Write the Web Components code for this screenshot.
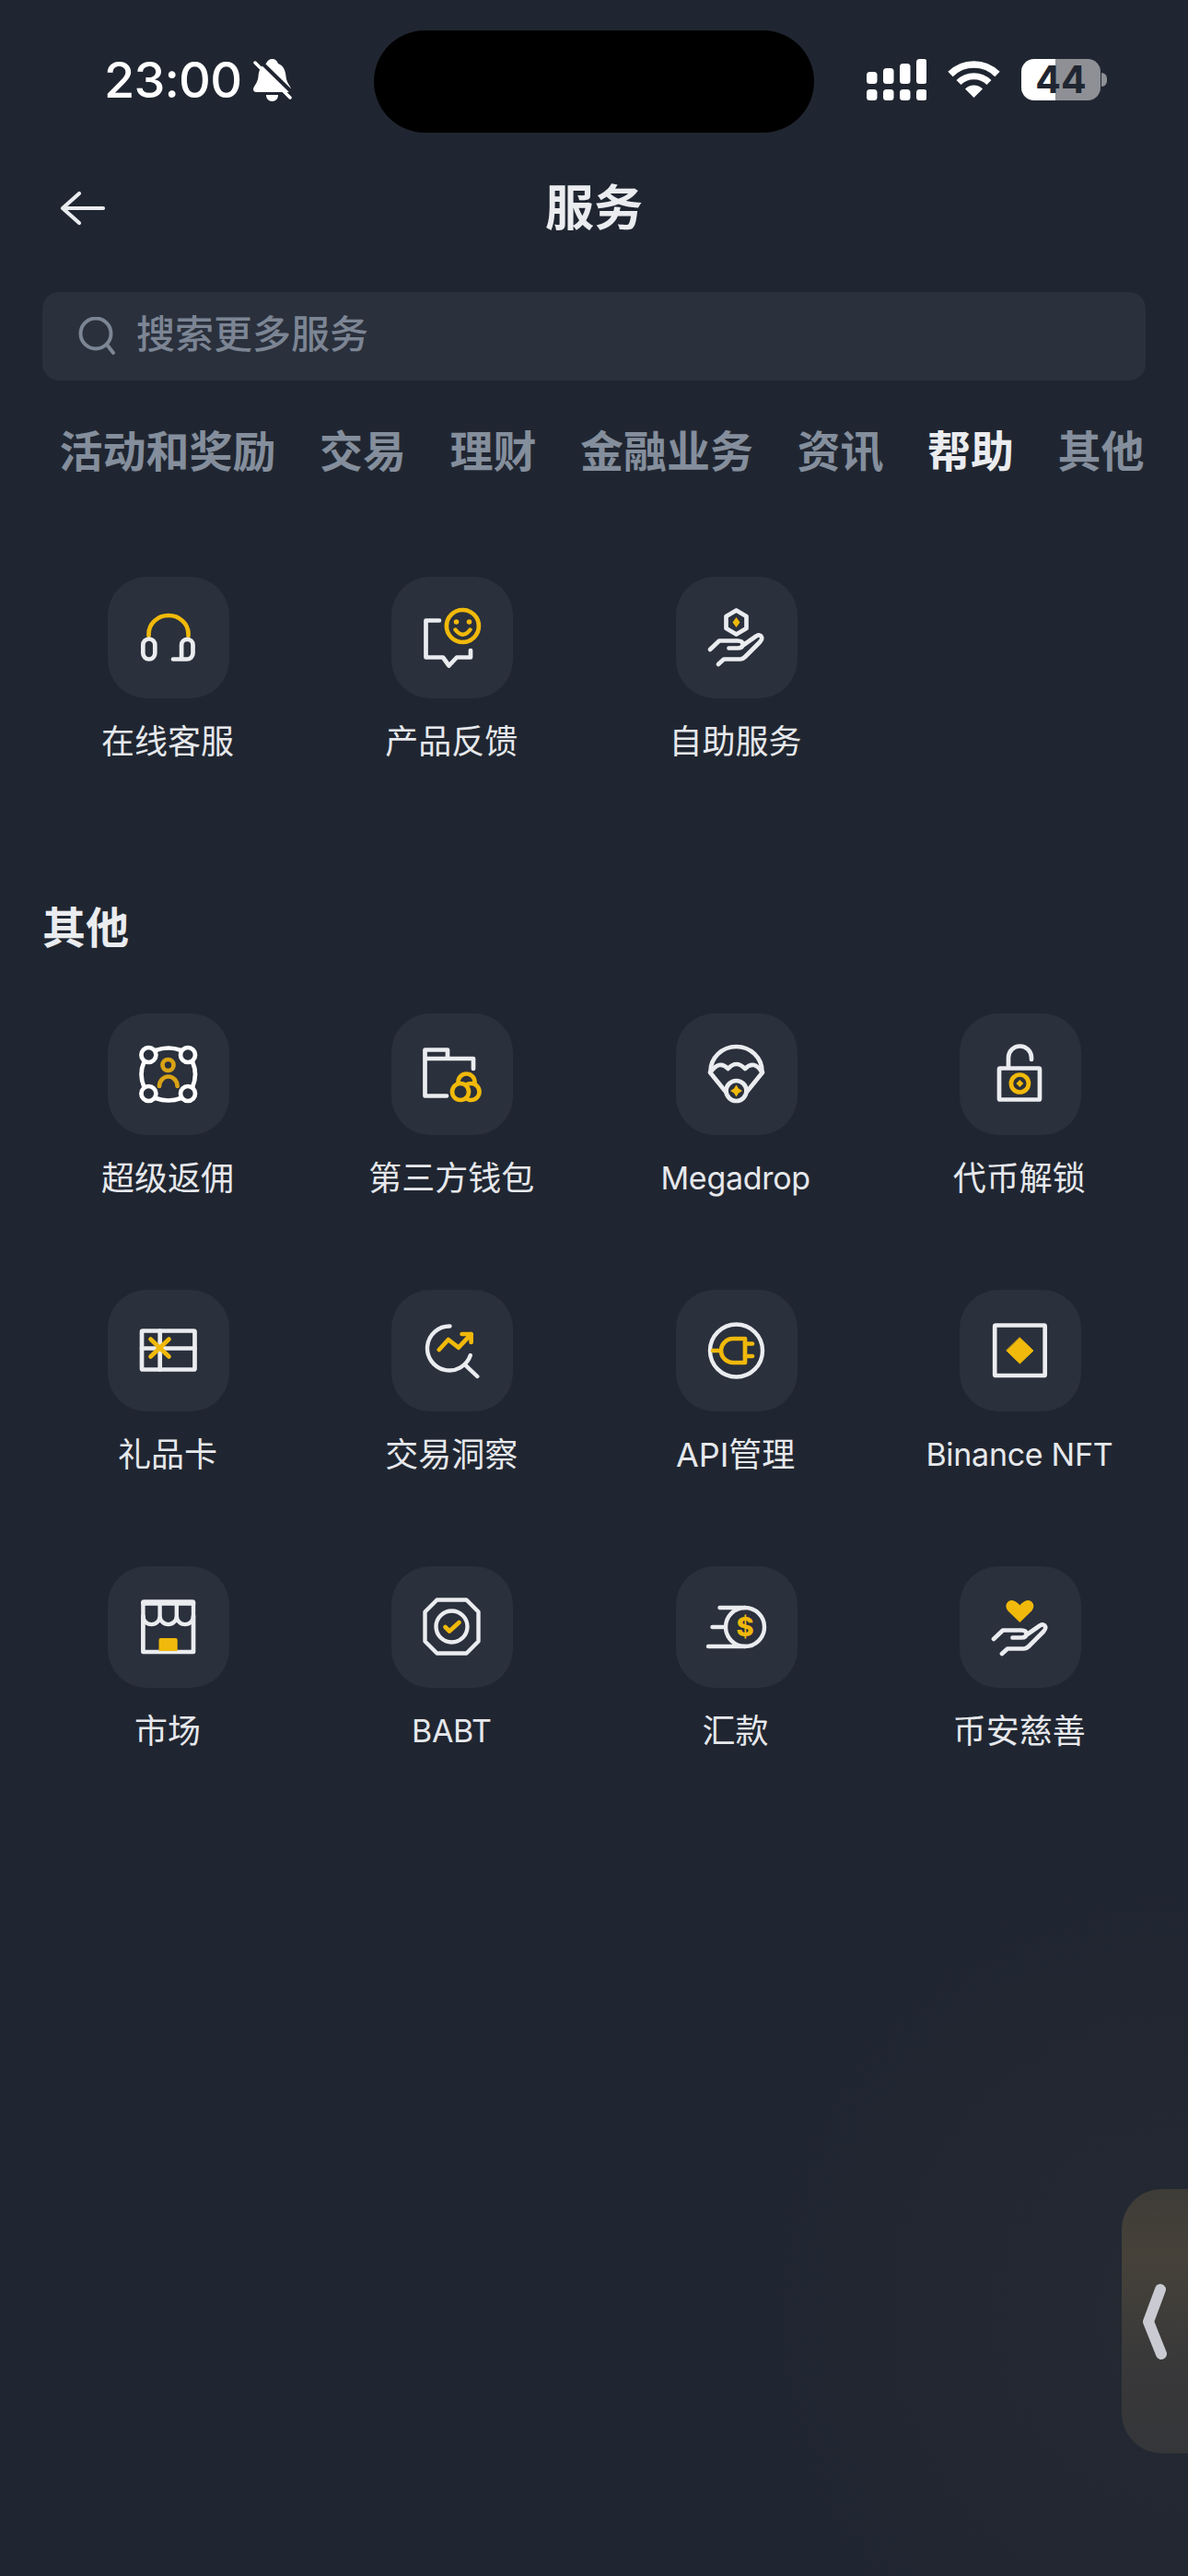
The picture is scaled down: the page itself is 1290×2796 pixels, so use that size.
<!DOCTYPE html>
<html lang="zh">
<head>
<meta charset="utf-8">
<title>服务</title>
<style>
  html, body {
    margin: 0;
    background: #202631;
  }
  body {
    font-family: Inter, 'Noto Sans CJK SC', sans-serif;
    color: #eaecef;
  }
</style>
</head>
<body>
<services-page>
  <status-bar></status-bar>
  <nav-bar>服务</nav-bar>
  <search-box>搜索更多服务</search-box>
  <tab-strip>
    <tab-item>活动和奖励</tab-item>
    <tab-item>交易</tab-item>
    <tab-item>理财</tab-item>
    <tab-item>金融业务</tab-item>
    <tab-item>资讯</tab-item>
    <tab-item active>帮助</tab-item>
    <tab-item>其他</tab-item>
  </tab-strip>
  <service-section first>
    <service-item icon="headset">在线客服</service-item>
    <service-item icon="feedback">产品反馈</service-item>
    <service-item icon="selfhelp">自助服务</service-item>
  </service-section>
  <service-section heading="其他">
    <service-item icon="rebate">超级返佣</service-item>
    <service-item icon="wallet">第三方钱包</service-item>
    <service-item icon="megadrop" latin>Megadrop</service-item>
    <service-item icon="unlock">代币解锁</service-item>
    <service-item icon="gift">礼品卡</service-item>
    <service-item icon="insight">交易洞察</service-item>
    <service-item icon="api">API管理</service-item>
    <service-item icon="nft" latin>Binance NFT</service-item>
    <service-item icon="market">市场</service-item>
    <service-item icon="babt" latin>BABT</service-item>
    <service-item icon="remit">汇款</service-item>
    <service-item icon="charity">币安慈善</service-item>
  </service-section>
  <side-handle></side-handle>
</services-page>

<script>
/**
 * The services screen, built from small web components.
 */

const HAND = 'M37 79L47 69.5H67Q73 69.5 72.5 74Q72 77.5 67 77.5H57.5M72 75L87 64.5Q91.5 62 93 65.5Q94 67.5 91 71L75 87Q72.5 89.5 70 89.5H52L46 95'

// Icons are drawn in the 132px tile's own coordinates.
const ICONS = {
  headset: `
    <path class="y" d="M44.5 64V62a21.5 20 0 0 1 43 0v2"/>
    <rect class="w" x="38.3" y="67.5" width="13" height="22" rx="6.5"/>
    <path class="w" d="M71 89.5H86a6.5 6.5 0 0 0 6.5-6.5V74a6.2 6.2 0 0 0-12.400 0v15"/>`,
  feedback: `
    <path class="w" d="M52 47.500H37.500V87.500H56L62.500 96.500L71 87.500H86V80"/>
    <circle class="y" cx="77.400" cy="53.500" r="17.500"/>
    <circle class="yf" cx="70.500" cy="49" r="2.800"/>
    <circle class="yf" cx="84.500" cy="49" r="2.800"/>
    <path class="y thin" d="M69.500 57.500Q77.500 68 85.500 57.500"/>`,
  selfhelp: `
    <path class="w" d="M65.500 36.500L76.500 43V56L65.500 62.500L54.500 56V43Z"/>
    <path class="yf" d="M65.500 44L69.500 49.500L65.500 55L61.500 49.500Z"/>
    <path class="w" d="${HAND}"/>`,
  rebate: `
    <circle class="p" cx="44.400" cy="45" r="8"/>
    <circle class="p" cx="87" cy="45" r="8"/>
    <circle class="p" cx="44.400" cy="87" r="8"/>
    <circle class="p" cx="87" cy="87" r="8"/>
    <path class="p" d="M52 40Q66 35 79.500 40M92 52.500Q98 66 92 80M79.500 92Q66 97 52 92M39.500 80Q33.500 66 39.500 52.500"/>
    <circle class="g" cx="65.500" cy="56" r="6"/>
    <path class="g" d="M56 79a9.800 10.500 0 0 1 19.600 0"/>`,
  wallet: `
    <path class="w" d="M60 89.500H36.500V39.500H61V49H89V60M36.500 49H61"/>
    <circle class="y" cx="81.500" cy="74.500" r="9"/>
    <circle class="y tf" cx="86.500" cy="85" r="9"/>
    <circle class="y tf" cx="75" cy="85" r="9"/>`,
  megadrop: `
    <path class="w" d="M37.500 63A28 27 0 0 1 93.500 63"/>
    <path class="w" d="M37.500 64Q47 50 56.500 60Q65.500 50 75 60Q85 50 93.500 64"/>
    <path class="w" d="M37 64L54 85M94 64L77 85"/>
    <circle class="w" cx="65.500" cy="84" r="11"/>
    <path class="yf" d="M65.500 77.500L68 81.500L72 84L68 86.500L65.500 90.500L63 86.500L59 84L63 81.500Z"/>`,
  unlock: `
    <path class="w" d="M53 58V48a12.500 12.500 0 0 1 25 0v2"/>
    <rect class="w" x="43" y="59.500" width="44" height="34" rx="1"/>
    <circle class="y" cx="65.400" cy="76" r="9.500"/>
    <path class="yf" d="M65.400 72L69.400 76L65.400 80L61.400 76Z"/>`,
  gift: `
    <rect class="w" x="37" y="44.500" width="57.500" height="42" rx="1"/>
    <path class="w" d="M37 63.500H94.500M56.700 44.500V86.500"/>
    <path class="y" d="M46.500 53.500L66.500 72.500M66.500 53.500L46.500 72.500"/>`,
  insight: `
    <path class="w thin" d="M63.500 39.500A24 24 0 1 0 85.800 71"/>
    <path class="w thin" d="M80.300 81.700L93.300 94"/>
    <path class="y" d="M51.800 65L61.800 54L72.900 62.700L86.600 48M76.600 48H86.600V57"/>`,
  api: `
    <circle class="w thin" cx="65.500" cy="66" r="28.500"/>
    <path class="y sq" d="M75 53H62a13 13 0 0 0 0 26H75Z"/>
    <path class="y" d="M40 66H48M75 58.500H83M75 72H83"/>`,
  nft: `
    <rect class="w" x="38.200" y="38.500" width="54.500" height="54.500" rx="1"/>
    <path class="yf round" d="M65.400 52L80 66L65.400 80L51 66Z"/>`,
  market: `
    <path class="w" d="M38.400 54V93H93V54"/>
    <rect class="w" x="38.400" y="38.500" width="54.600" height="2" rx="1"/>
    <path class="w thin" d="M38.400 40V54a9.100 9.100 0 0 0 18.200 0V40M56.600 54a9.100 9.100 0 0 0 18.200 0V40M74.800 54a9.100 9.100 0 0 0 18.200 0V40"/>
    <path class="yf" d="M55.500 80a2 2 0 0 1 2-2H73.700a2 2 0 0 1 2 2V92H55.500Z"/>`,
  babt: `
    <path class="w thin" d="M49.500 36.500H81.500L94.500 49.500V81.500L81.500 94.500H49.500L36.500 81.500V49.500Z"/>
    <circle class="w thin" cx="65.500" cy="65.500" r="17"/>
    <path class="y" d="M58.500 66L63 70.500L73.500 61"/>`,
  remit: `
    <circle class="w thin" cx="75" cy="66" r="21"/>
    <path class="w thin" d="M47.500 45H75M39.500 66H53M35 87H75"/>
    <text x="75" y="76" text-anchor="middle" font-family="Inter, sans-serif" font-size="29" font-weight="800" fill="#f0b90b">$</text>`,
  charity: `
    <path class="yf" d="M65.400 61L52.500 48.500C47 42 53.500 34.500 60 38C62.500 39.300 64.500 41 65.400 42.500C66.300 41 68.300 39.300 70.800 38C77.300 34.500 83.800 42 78.300 48.500Z"/>
    <path class="w" d="${HAND}"/>`
}

const iconStyles = `
  svg { display: block; width: 132px; height: 132px; }
  path, circle, rect { fill: none; stroke-width: 4.7; stroke-linecap: round; stroke-linejoin: round; }
  .w { stroke: #eaecef; }
  .p { stroke: #ffffff; }
  .y { stroke: #f0b90b; }
  .g { stroke: #d9a316; }
  .thin { stroke-width: 4.4; }
  .tf { fill: #2a303c; }
  .yf { fill: #f0b90b; stroke: none; }
  .round { stroke: #f0b90b; stroke-width: 1; }
`

customElements.define('services-page',
  /**
   * The full screen, holds everything.
   */
  class extends HTMLElement {
    constructor () {
      super()
      this.attachShadow({ mode: 'open' }).innerHTML = `
        <style>
          :host {
            display: block;
            position: relative;
            height: 2796px;
            overflow: hidden;
            background:
              radial-gradient(circle 480px at 1290px 2510px, rgba(70, 70, 60, 0.10), rgba(70, 70, 60, 0) 100%),
              #202631;
          }
        </style>
        <slot></slot>`
    }
  })

customElements.define('status-bar',
  /**
   * The phone's status bar with clock, island and indicators.
   */
  class extends HTMLElement {
    constructor () {
      super()
      this.attachShadow({ mode: 'open' }).innerHTML = `
        <style>
          :host {
            display: grid;
            grid-template-columns: 1fr 478px 1fr;
            height: 176px;
            padding-top: 33px;
            box-sizing: border-box;
            color: #fff;
          }
          .left, .right { display: flex; align-items: center; height: 111px; margin-top: -2px; }
          .left { padding-left: 113px; gap: 13px; }
          .time { font: 550 54px/1 Inter, sans-serif; letter-spacing: -0.8px; }
          .island { height: 111px; background: #000; border-radius: 56px; }
          .right { padding-left: 57px; }
          .wifi { margin-left: 23px; }
          .battery {
            position: relative;
            margin-left: 23px;
            width: 86px;
            height: 45px;
            border-radius: 14px;
            background: linear-gradient(90deg, #fff 43.5%, #8e9095 43.5%);
            color: #202631;
            font: 700 41px/45px Inter, sans-serif;
            text-align: center;
          }
          .nub {
            width: 6px;
            height: 15px;
            margin-left: 1px;
            background: #8e9095;
            border-radius: 0 8px 8px 0;
          }
        </style>
        <div class="left">
          <span class="time">23:00</span>
          <svg width="42" height="46" viewBox="0 0 42 46">
            <path fill="#fff" d="M20.700 0C24 0 26 2 27 5C33 7 35 13 35.500 19C36 26 41 30 41 33C41 35 39.500 36 37.500 36H3.500C1.500 36 0 35 0 33C0 30 5 26 5.500 19C6 13 8 7 14 5C15 2 17.400 0 20.700 0Z"/>
            <path fill="#fff" d="M14 39H27C27 43 24.500 46 20.500 46C16.500 46 14 43 14 39Z"/>
            <path stroke="#202631" stroke-width="4" d="M6 1L46 40"/>
            <path stroke="#fff" stroke-width="3.500" stroke-linecap="round" d="M2 4L40 42"/>
          </svg>
        </div>
        <div class="island"></div>
        <div class="right">
          <svg width="65" height="45" viewBox="0 0 65 45" fill="#fff">
            <rect x="0" y="14" width="11.500" height="13" rx="3.500"/>
            <rect x="18" y="10" width="11.500" height="17" rx="3.500"/>
            <rect x="36" y="5" width="11.500" height="22" rx="3.500"/>
            <rect x="54" y="0" width="11.500" height="27" rx="3.500"/>
            <rect x="0" y="33" width="11.500" height="12" rx="3.500"/>
            <rect x="18" y="33" width="11.500" height="12" rx="3.500"/>
            <rect x="36" y="33" width="11.500" height="12" rx="3.500"/>
            <rect x="54" y="33" width="11.500" height="12" rx="3.500"/>
          </svg>
          <svg class="wifi" width="57" height="41" viewBox="0 0 57 41">
            <path fill="none" stroke="#fff" stroke-width="7.500" d="M3 14.500A36 36 0 0 1 54 14.500"/>
            <path fill="none" stroke="#fff" stroke-width="7" d="M12 23.500A23.300 23.300 0 0 1 45 23.500"/>
            <path fill="#fff" d="M28.500 40L19 30.500A13.400 13.400 0 0 1 38 30.500Z"/>
          </svg>
          <div class="battery">44</div>
          <div class="nub"></div>
        </div>`
    }
  })

customElements.define('nav-bar',
  /**
   * The title row with a back arrow.
   */
  class extends HTMLElement {
    constructor () {
      super()
      this.attachShadow({ mode: 'open' }).innerHTML = `
        <style>
          :host {
            display: grid;
            grid-template-columns: 1fr auto 1fr;
            align-items: center;
            height: 100px;
            padding-left: 65px;
            padding-right: 65px;
          }
          .title { font-size: 53px; font-weight: 700; line-height: 100px; color: #eaecef; }
          svg { display: block; }
        </style>
        <svg width="50" height="38" viewBox="0 0 50 38" fill="none" stroke="#eaecef" stroke-width="4.200" stroke-linecap="round" stroke-linejoin="round">
          <path d="M21 3L3 19L21 35M3 19H47"/>
        </svg>
        <div class="title"><slot></slot></div>
        <div></div>`
    }
  })

customElements.define('search-box',
  /**
   * The search field, only shows its placeholder.
   */
  class extends HTMLElement {
    constructor () {
      super()
      this.attachShadow({ mode: 'open' }).innerHTML = `
        <style>
          :host {
            display: flex;
            align-items: center;
            gap: 21px;
            height: 96px;
            margin: 41px 46px 0;
            padding-left: 39px;
            border-radius: 18px;
            background: #2a303c;
            color: #7c8594;
            font-size: 42px;
            font-weight: 500;
          }
          .text { line-height: 52px; padding-bottom: 5px; }
        </style>
        <svg width="42" height="42" viewBox="0 0 42 42" fill="none" stroke="#7c8594" stroke-width="4" stroke-linecap="round">
          <circle cx="19" cy="18" r="16.500"/>
          <path d="M31 30L38 39"/>
        </svg>
        <span class="text"><slot></slot></span>`
    }
  })

customElements.define('tab-strip',
  /**
   * The row of category tabs.
   */
  class extends HTMLElement {
    constructor () {
      super()
      this.attachShadow({ mode: 'open' }).innerHTML = `
        <style>
          :host {
            display: flex;
            gap: 47.500px;
            margin-top: 40px;
            padding-left: 64.500px;
            white-space: nowrap;
          }
        </style>
        <slot></slot>`
    }
  })

customElements.define('tab-item',
  /**
   * One category tab, the active attribute makes it light.
   */
  class extends HTMLElement {
    constructor () {
      super()
      this.attachShadow({ mode: 'open' }).innerHTML = `
        <style>
          :host {
            display: block;
            font-size: 47px;
            font-weight: 700;
            line-height: 74px;
            color: #848e9c;
          }
          :host([active]) { color: #eaecef; }
        </style>
        <slot></slot>`
    }
  })

customElements.define('service-section',
  /**
   * A titled grid of services.
   */
  class extends HTMLElement {
    constructor () {
      super()
      const heading = this.getAttribute('heading')
      this.attachShadow({ mode: 'open' }).innerHTML = `
        <style>
          :host {
            display: block;
            padding: 0 28px 0 29px;
            margin-top: 150px;
          }
          :host([first]) { margin-top: 99px; }
          h2 {
            margin: 0 0 63px 17px;
            font-size: 47px;
            font-weight: 700;
            line-height: 60px;
            color: #eaecef;
          }
          .grid {
            display: grid;
            grid-template-columns: repeat(4, 1fr);
            row-gap: 99px;
          }
        </style>
        ${heading ? `<h2>${heading}</h2>` : ''}
        <div class="grid"><slot></slot></div>`
    }
  })

customElements.define('service-item',
  /**
   * One service: icon tile with its label below.
   */
  class extends HTMLElement {
    constructor () {
      super()
      this.attachShadow({ mode: 'open' }).innerHTML = `
        <style>
          :host {
            display: flex;
            flex-direction: column;
            align-items: center;
          }
          .tile {
            width: 132px;
            height: 132px;
            border-radius: 42px;
            background: #2a303c;
          }
          .label {
            margin-top: 25px;
            padding-right: 2px;
            font-size: 36px;
            line-height: 44px;
            color: #e6e8ec;
            white-space: nowrap;
          }
          :host([latin]) .label { font-size: 34px; letter-spacing: -0.3px; }
          ${iconStyles}
        </style>
        <div class="tile">
          <svg viewBox="0 0 132 132">${ICONS[this.getAttribute('icon')]}</svg>
        </div>
        <div class="label"><slot></slot></div>`
    }
  })

customElements.define('side-handle',
  /**
   * The floating pull tab on the right edge.
   */
  class extends HTMLElement {
    constructor () {
      super()
      this.attachShadow({ mode: 'open' }).innerHTML = `
        <style>
          :host {
            position: absolute;
            left: 1218px;
            top: 2376px;
            width: 72px;
            height: 287px;
            border-radius: 44px 0 0 44px;
            background: linear-gradient(180deg, #3e3c37 0%, #46423a 25%, #38383a 70%, #353639 100%);
          }
          svg { position: absolute; left: 22px; top: 102px; }
        </style>
        <svg width="34" height="90" viewBox="0 0 34 90" fill="none" stroke="#c9cad2" stroke-width="12" stroke-linecap="round" stroke-linejoin="round">
          <path d="M20 7L7 42L21 77"/>
        </svg>`
    }
  })
</script>
</body>
</html>
